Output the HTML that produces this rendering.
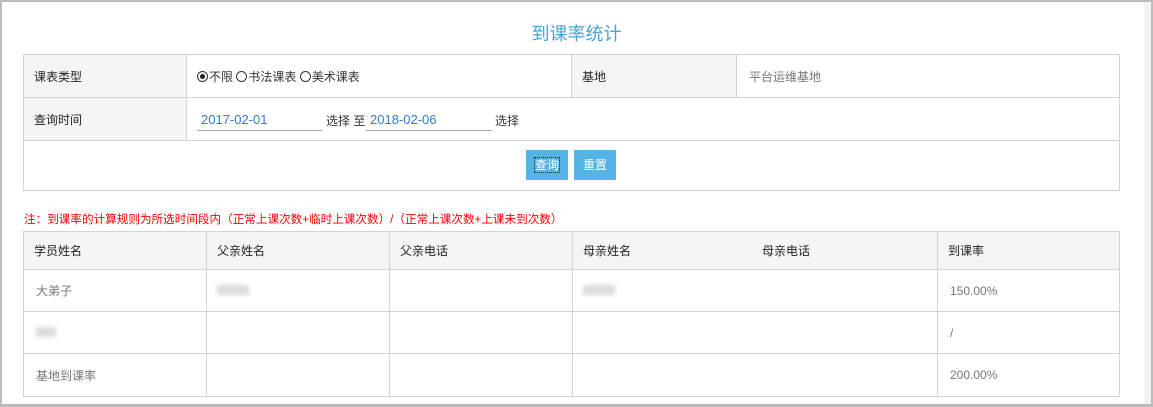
<!DOCTYPE html>
<html><head><meta charset="utf-8"><style>
*{margin:0;padding:0;box-sizing:border-box}
body{width:1153px;height:407px;overflow:hidden;background:#fff;font-family:"Liberation Sans","Noto Sans CJK SC",sans-serif;font-size:12px;color:#333;position:relative}
.frame{position:absolute;left:0;top:0;width:1153px;height:407px;border-top:2px solid #bcbcbc;border-left:2px solid #bcbcbc;border-bottom:3px solid #bcbcbc;border-right:2px solid #bcbcbc}
.strip{position:absolute;left:1144px;top:2px;width:7px;height:402px;background:#f4f4f4}
.abs{position:absolute}
.title{left:0;width:1153px;top:20px;text-align:center;color:#4aa3d8;font-size:18px}
table{border-collapse:collapse;position:absolute;table-layout:fixed}
td{border:1px solid #d4d4d4;padding:0 0 0 10px;vertical-align:middle}
.lbl{background:#f5f5f5;color:#222}
.btn{position:absolute;top:150px;width:42px;height:30px;background:#55b4e6;color:#fff;text-align:center;line-height:30px;font-size:12px}
.inp{position:absolute;top:110px;height:21px;border-bottom:1px solid #aaa;color:#2a7fd4;font-size:13px;line-height:20px;padding-left:4px}
.radio{display:inline-block;width:11px;height:11px;border:1px solid #333;border-radius:50%;vertical-align:-1px;position:relative;margin-right:1px}
.radio.on:after{content:"";position:absolute;left:2px;top:2px;width:5px;height:5px;border-radius:50%;background:#222}
.blur{display:inline-block;background:#ccc;filter:blur(2px);height:10px;opacity:.7}
.g{color:#777}
</style></head><body>
<div class="frame"></div><div class="strip"></div>
<div class="abs title">到课率统计</div>
<table style="left:23px;top:54px;width:1096px">
<colgroup><col style="width:163px"><col style="width:385px"><col style="width:165px"><col style="width:383px"></colgroup>
<tr style="height:43px"><td class="lbl">课表类型</td><td><span class="radio on"></span>不限 <span class="radio"></span>书法课表 <span class="radio"></span>美术课表</td><td class="lbl">基地</td><td class="g" style="padding-left:12px">平台运维基地</td></tr>
<tr style="height:43px"><td class="lbl">查询时间</td><td colspan="3"></td></tr>
<tr style="height:50px"><td colspan="4"></td></tr>
</table>
<div class="inp" style="left:197px;width:125px">2017-02-01</div>
<div class="abs" style="left:326px;top:112px">选择 至</div>
<div class="inp" style="left:366px;width:126px">2018-02-06</div>
<div class="abs" style="left:495px;top:112px">选择</div>
<div class="btn" style="left:526px"><span style="outline:1px dotted #222">查询</span></div>
<div class="btn" style="left:574px">重置</div>
<div class="abs" style="left:24px;top:211px;color:#f00;font-size:11.6px">注：到课率的计算规则为所选时间段内（正常上课次数+临时上课次数）/（正常上课次数+上课未到次数）</div>
<table style="left:23px;top:231px;width:1096px">
<colgroup><col style="width:183px"><col style="width:183px"><col style="width:183px"><col style="width:365px"><col style="width:182px"></colgroup>
<tr style="height:38px" class="lbl"><td>学员姓名</td><td>父亲姓名</td><td>父亲电话</td><td>母亲姓名<span style="margin-left:131px">母亲电话</span></td><td>到课率</td></tr>
<tr style="height:42px"><td class="g" style="padding-left:12px">大弟子</td><td><span class="blur" style="width:32px"></span></td><td></td><td><span class="blur" style="width:32px"></span></td><td class="g" style="padding-left:12px">150.00%</td></tr>
<tr style="height:42px"><td style="padding-left:12px"><span class="blur" style="width:20px"></span></td><td></td><td></td><td></td><td class="g" style="padding-left:12px">/</td></tr>
<tr style="height:43px"><td class="g" style="padding-left:12px">基地到课率</td><td></td><td></td><td></td><td class="g" style="padding-left:12px">200.00%</td></tr>
</table>
</body></html>
